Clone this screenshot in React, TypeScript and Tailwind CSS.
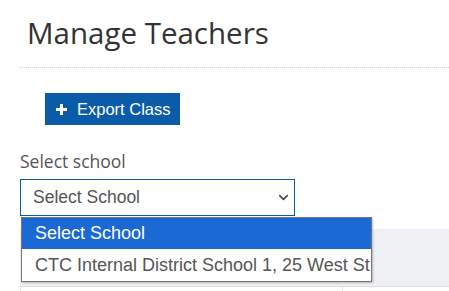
import { ChevronDown } from 'lucide-react'

export default function App() {
  return (
    <div className="w-[449px] h-[291px] overflow-hidden bg-white font-['Open_Sans',sans-serif]">
      <h1 className="pt-[13px] pl-[27px] text-[29.5px] leading-[40px] text-[#333]">Manage Teachers</h1>
      <div className="ml-5 mt-[14px] border-t border-dotted border-[#cfcfcf]" />

      <button
        type="button"
        className="ml-[45px] mt-[25px] h-8 w-[135px] flex items-center gap-[10px] pl-[10px] bg-[#0b5ca8] text-white text-[16.5px] font-['Liberation_Sans',Arial,sans-serif]"
      >
        <svg width="11" height="11" viewBox="0 0 11 11" className="ml-[1px]">
          <path d="M4 0h3v4h4v3H7v4H4V7H0V4h4z" fill="#fff" />
        </svg>
        Export Class
      </button>

      <div className="ml-5 mt-[25px] text-[17.5px] leading-[22px] text-[#555]">Select school</div>

      <div className="relative ml-5 mt-[7px] w-[275px]">
        <div className="h-[37px] border border-[#0b5ca8] flex items-center justify-between pl-[12px] pr-[3px] text-[17.5px] text-[#555] font-['Liberation_Sans',Arial,sans-serif]">
          <span>Select School</span>
          <ChevronDown size={15} strokeWidth={2.5} className="text-[#444]" />
        </div>

        <div className="absolute left-[1px] top-[38px] w-[351px] z-10 bg-white border border-[#767676] shadow-[1px_1px_2px_rgba(0,0,0,0.25)] text-[18px] font-['Liberation_Sans',Arial,sans-serif] overflow-hidden">
          <div className="h-[31px] flex items-center pl-[13px] bg-[#1a69d4] text-white">Select School</div>
          <div className="h-[32px] flex items-center pl-[13px] text-[#555] whitespace-nowrap">
            CTC Internal District School 1, 25 West St
          </div>
        </div>
      </div>

      <div className="ml-5 mt-[13px] h-[57px] bg-[#eef0f4]" />
      <div className="ml-5 grid grid-cols-[323px_1fr] border-t border-[#ddd] h-[20px]">
        <div className="border-l border-[#e5e5e5] border-r" />
        <div />
      </div>
    </div>
  )
}
